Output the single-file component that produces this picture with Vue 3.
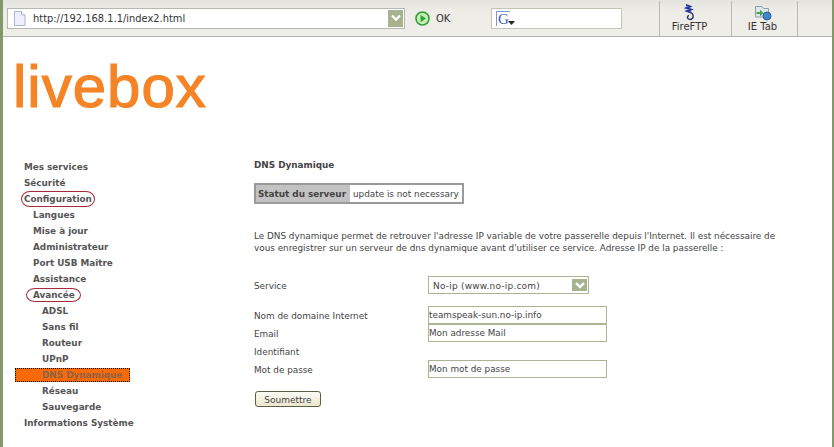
<script setup>
const menu = [
  { label: 'Mes services', level: 0 },
  { label: 'Sécurité', level: 0 },
  { label: 'Configuration', level: 0, ring: 'ring' },
  { label: 'Langues', level: 1 },
  { label: 'Mise à jour', level: 1 },
  { label: 'Administrateur', level: 1 },
  { label: 'Port USB Maître', level: 1 },
  { label: 'Assistance', level: 1 },
  { label: 'Avancée', level: 1, ring: 'ring wide' },
  { label: 'ADSL', level: 2 },
  { label: 'Sans fil', level: 2 },
  { label: 'Routeur', level: 2 },
  { label: 'UPnP', level: 2 },
  { label: 'DNS Dynamique', level: 2, active: true },
  { label: 'Réseau', level: 2 },
  { label: 'Sauvegarde', level: 2 },
  { label: 'Informations Système', level: 0 },
]
</script>

<template>
  <div class="page">
    <header class="toolbar">
      <div class="url">
        <svg class="page-icon" width="13" height="15" viewBox="0 0 13 15">
          <path d="M1.5 .5H8.5L12 4V14.5H1.5Z" fill="#eef1fb" stroke="#a9b4d8" />
          <path d="M8.5 .5V4H12" fill="#fff" stroke="#a9b4d8" />
        </svg>
        <span class="url-text">http://192.168.1.1/index2.html</span>
        <span class="drop">
          <svg width="10" height="8" viewBox="0 0 10 8"><path d="M1 1.500 5 5.500 9 1.500" fill="none" stroke="#fff" stroke-width="2.4" /></svg>
        </span>
      </div>
      <svg class="go" width="15" height="15" viewBox="0 0 15 15">
        <circle cx="7.500" cy="7.500" r="6.500" fill="#c9efb8" stroke="#2f9e35" stroke-width="1.600" />
        <path d="M5.500 3.800 11 7.500 5.500 11.200Z" fill="#2fa33a" />
      </svg>
      <span class="ok">OK</span>
      <div class="search">
        <span class="g">G</span>
        <svg class="g-arrow" width="7" height="4" viewBox="0 0 7 4"><path d="M0 0H7L3.500 4Z" fill="#222" /></svg>
      </div>
      <div class="tool first">
        <svg width="11" height="17" viewBox="0 0 11 17">
          <path d="M2 1 6 2.500 2.500 4 7 5.500 3 7 7 8.500" fill="none" stroke="#2b3d9c" stroke-width="2" />
          <path d="M7 8.500C10.500 11 9.500 15.500 6 15.500 3 15.500 2.500 12 5 11.500" fill="none" stroke="#30386e" stroke-width="1.400" />
        </svg>
        <span>FireFTP</span>
      </div>
      <div class="tool second">
        <svg width="18" height="15" viewBox="0 0 18 15">
          <path d="M1.500 .5H8L9.500 2.500H14.500V11H1.500Z" fill="#dfe8e6" stroke="#8aa0a8" />
          <path d="M2.500 6H6V3.500L9.500 7 6 10.500V8H2.500Z" fill="#3fa35a" />
          <circle cx="13" cy="10" r="4" fill="#3f86cf" stroke="#2a5f9e" />
        </svg>
        <span>IE Tab</span>
      </div>
      <div class="tool-end"></div>
    </header>

    <div class="logo">livebox</div>

    <div class="columns">
      <nav class="menu">
        <div
          v-for="item in menu"
          :key="item.label"
          class="menu-row"
          :class="['level-' + item.level, { active: item.active }]"
        >
          <span :class="item.ring">{{ item.label }}</span>
        </div>
      </nav>

      <main class="content">
        <h1 class="title">DNS Dynamique</h1>
        <div class="status">
          <span class="status-label">Statut du serveur</span>
          <span class="status-value">update is not necessary</span>
        </div>
        <p class="intro">
          Le DNS dynamique permet de retrouver l'adresse IP variable de votre passerelle depuis l'Internet. Il est nécessaire de<br />
          vous enregistrer sur un serveur de dns dynamique avant d'utiliser ce service. Adresse IP de la passerelle :
        </p>
        <form class="form" @submit.prevent>
          <div class="row service">
            <label>Service</label>
            <div class="select">
              <span class="select-text">No-ip (www.no-ip.com)</span>
              <span class="drop small">
                <svg width="10" height="7" viewBox="0 0 10 7"><path d="M1 1 5 5 9 1" fill="none" stroke="#fff" stroke-width="2.4" /></svg>
              </span>
            </div>
          </div>
          <div class="row"><label>Nom de domaine Internet</label><div class="field">teamspeak-sun.no-ip.info</div></div>
          <div class="row"><label>Email</label><div class="field">Mon adresse Mail</div></div>
          <div class="row"><label>Identifiant</label></div>
          <div class="row"><label>Mot de passe</label><div class="field">Mon mot de passe</div></div>
          <button class="submit" type="button">Soumettre</button>
        </form>
      </main>
    </div>
  </div>
</template>

<style>
html, body { margin: 0; background: #fff; }
</style>

<style scoped>
.page {
  width: 834px;
  height: 447px;
  box-sizing: border-box;
  border-left: 3px solid #84996b;
  border-right: 2px solid #84996b;
  overflow: hidden;
  background: #fff;
  font-family: "DejaVu Sans", Verdana, sans-serif;
  font-size: 8.83px;
  color: #444;
}
.toolbar {
  height: 37px;
  box-sizing: border-box;
  display: flex;
  align-items: center;
  background: linear-gradient(#e3e3df, #eeece6 30%, #f0eee8);
  border-bottom: 1px solid #aeb0ab;
  color: #333;
}
.url {
  margin-left: 4px;
  width: 398px;
  height: 21px;
  box-sizing: border-box;
  display: flex;
  align-items: center;
  background: #fff;
  border: 1px solid #b4b9b0;
}
.page-icon { margin-left: 5px; }
.url-text { margin-left: 7px; flex: 1; font-size: 9.9px; color: #333; }
.drop {
  width: 15px;
  height: 17px;
  margin-right: 1px;
  display: flex;
  align-items: center;
  justify-content: center;
  background: #a7b38e;
}
.drop.small { width: 15px; height: 12px; margin: 0 1px 0 0; }
.go { margin-left: 10px; }
.ok { margin-left: 6px; width: 55px; font-size: 10px; }
.search {
  position: relative;
  width: 131px;
  height: 21px;
  box-sizing: border-box;
  background: #fff;
  border: 1px solid #c2c6b6;
  display: flex;
  align-items: center;
}
.g {
  margin-left: 4px;
  font: 15px "Liberation Serif", serif;
  color: #3b62b0;
  border-left: 1px solid #7e9ad0;
  border-top: 1px solid #7e9ad0;
  padding: 0 1px;
  line-height: 14px;
}
.g-arrow { position: absolute; left: 16px; top: 12px; }
.tool {
  height: 35px;
  box-sizing: border-box;
  border-left: 1px solid #b6b8b2;
  display: flex;
  flex-direction: column;
  align-items: center;
  justify-content: flex-end;
  font-size: 10px;
  padding-bottom: 3px;
  line-height: 12px;
}
.tool.first { margin-left: 37px; width: 72px; padding-right: 12px; }
.tool.second { width: 66px; padding-right: 4px; }
.tool-end { height: 35px; border-left: 1px solid #b6b8b2; }
.logo {
  height: 100px;
  padding-left: 10px;
  font: 60px/100px "Liberation Sans", Arial, sans-serif;
  letter-spacing: 1px;
  color: #f58426;
  -webkit-text-stroke: 1.2px #f58426;
  box-sizing: border-box;
}
.columns {
  margin-top: 22px;
  display: flex;
}
.menu { width: 251px; font-weight: bold; color: #555; }
.menu-row {
  height: 16px;
  line-height: 16px;
  white-space: nowrap;
}
.level-0 { padding-left: 21px; }
.level-1 { padding-left: 30px; }
.level-2 { padding-left: 39px; }
.menu-row.active {
  margin: 1px 0 1px 12px;
  padding-left: 26px;
  width: 115px;
  height: 14px;
  line-height: 12px;
  box-sizing: border-box;
  background: #f86a08;
  border: 1px dotted #000;
  color: #8d6248;
}
.ring { position: relative; }
.ring::before {
  content: "";
  position: absolute;
  left: -3px;
  right: -3px;
  top: -3px;
  bottom: -3px;
  border: 1px solid #a52a3a;
  border-radius: 9px / 50%;
}
.ring.wide::before {
  left: -7px;
  right: -6px;
  top: -2px;
  bottom: -2px;
}
.content { flex: 1; margin-top: -1px; }
.title { margin: 0; height: 14px; line-height: 14px; font-size: 8.83px; font-weight: bold; color: #444; }
.status {
  margin-top: 11px;
  width: 210px;
  height: 21px;
  box-sizing: border-box;
  display: flex;
  border: 2px solid #9a9a9a;
  line-height: 18px;
}
.status-label { width: 94px; padding-left: 2px; box-sizing: border-box; background: #c2c2c2; font-weight: bold; color: #444; white-space: nowrap; }
.status-value { flex: 1; padding-left: 3px; color: #444; white-space: nowrap; }
.intro { margin: 26px 0 0; width: 540px; line-height: 12px; white-space: nowrap; color: #444; }
.form { margin-top: 22px; }
.row {
  display: flex;
  align-items: center;
  height: 18px;
}
.row label { width: 174px; padding-top: 2px; }
.row.service { margin-bottom: 12px; }
.select {
  width: 161px;
  height: 18px;
  box-sizing: border-box;
  border: 1px solid #abb595;
  display: flex;
  align-items: center;
  justify-content: space-between;
  padding-left: 4px;
  font-size: 9px;
  letter-spacing: .2px;
}
.select-text { padding-top: 1px; }
.field {
  width: 179px;
  height: 18px;
  box-sizing: border-box;
  border: 1px solid #abb595;
  line-height: 17px;
}
.submit {
  display: block;
  margin: 13px 0 0 1px;
  width: 66px;
  height: 16px;
  padding: 1px 0 0;
  font: 9px "DejaVu Sans", sans-serif;
  color: #444;
  background: linear-gradient(#fdfdf6, #ece6cf);
  border: 1px solid #5b5f45;
  border-radius: 3px;
}
</style>
